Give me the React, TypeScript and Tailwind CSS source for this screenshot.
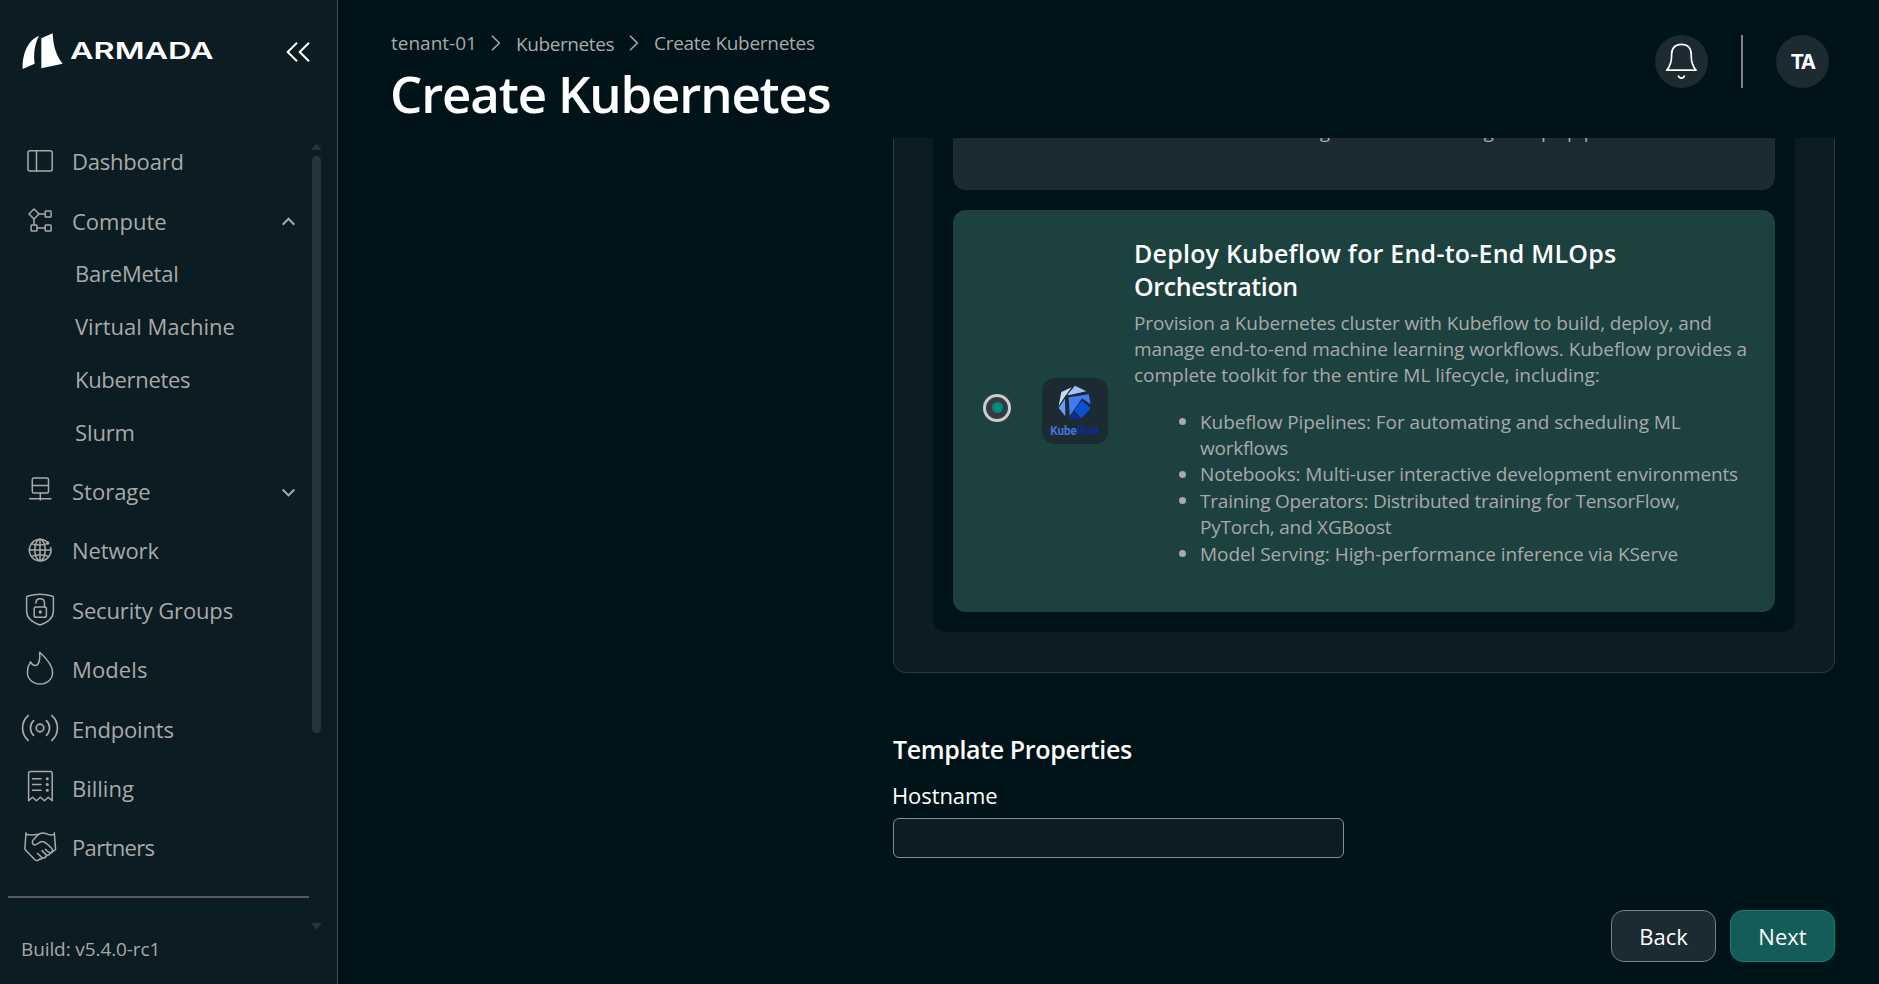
import { ReactNode } from 'react';

type NavItem = {
  label: string;
  tracking: string;
  icon: ReactNode;
  open?: boolean;
  children?: { label: string; tracking: string }[];
};

function NavIcon({ children }: { children: ReactNode }) {
  return (
    <svg
      className="size-[44px] shrink-0"
      viewBox="0 0 44 44"
      fill="none"
      stroke="currentColor"
      strokeWidth="1.5"
      strokeLinecap="round"
      strokeLinejoin="round"
    >
      {children}
    </svg>
  );
}

const navItems: NavItem[] = [
  {
    label: 'Dashboard',
    tracking: 'tracking-[-0.2px]',
    icon: (
      <NavIcon>
        <rect x="10" y="11.7" width="24.2" height="20.2" rx="2" />
        <path d="M18.5 11.7v20.2" />
      </NavIcon>
    ),
  },
  {
    label: 'Compute',
    tracking: 'pt-px tracking-normal',
    open: true,
    icon: (
      <NavIcon>
        <path d="M16 10l5 5-5 5-5-5z" />
        <rect x="27.2" y="12.1" width="5.9" height="5.9" rx="0.8" />
        <rect x="13.1" y="26.1" width="5.9" height="5.9" rx="0.8" />
        <rect x="27.2" y="26.1" width="5.9" height="5.9" rx="0.8" />
        <path d="M21 15h6M16 20v6M19 29h8" />
      </NavIcon>
    ),
    children: [
      { label: 'BareMetal', tracking: 'tracking-[-0.22px]' },
      { label: 'Virtual Machine', tracking: 'tracking-normal' },
      { label: 'Kubernetes', tracking: 'tracking-[-0.3px]' },
      { label: 'Slurm', tracking: 'tracking-[-0.12px]' },
    ],
  },
  {
    label: 'Storage',
    tracking: 'tracking-normal',
    open: false,
    icon: (
      <NavIcon>
        <rect x="14.3" y="9.1" width="16.2" height="15" rx="1.5" />
        <path d="M14.3 16.6h16.2M22.3 24.1v6.9M11.6 29.8h21.2" />
      </NavIcon>
    ),
  },
  {
    label: 'Network',
    tracking: 'tracking-[-0.1px]',
    icon: (
      <NavIcon>
        <path d="M29.4 13A10.8 10.8 0 1 0 32.7 18.6" />
        <ellipse cx="22" cy="21" rx="5.2" ry="10.8" />
        <path d="M11.2 21h21.6M22 10.2v21.6M13.4 14.6c5 2 12 2 16.4-.2M13.4 27.4c5-2 12.2-2 17.2 0" />
        <circle cx="29.8" cy="14" r="0.9" />
      </NavIcon>
    ),
  },
  {
    label: 'Security Groups',
    tracking: 'tracking-[-0.15px]',
    icon: (
      <NavIcon>
        <path d="M8.6 9.6C8.6 8.7 9 8.3 10 8c8-2.4 16-2.4 24 0 1 .3 1.4.7 1.4 1.6v13.2C35.4 30 30 34.5 22 37 14 34.5 8.6 30 8.6 22.8z" />
        <rect x="16.2" y="18.9" width="12.2" height="10.4" rx="1.8" />
        <path d="M17.9 15.2c0-6 8.6-6 8.6 0v3.7" />
        <circle cx="22.3" cy="24" r="0.9" fill="currentColor" />
      </NavIcon>
    ),
  },
  {
    label: 'Models',
    tracking: 'tracking-[0.1px]',
    icon: (
      <NavIcon>
        <path d="M21.7 5.2C22 11 21.4 18 17.5 18.4c-2.2.2-4-1.6-5-3.5C10.5 18 9.4 21 9.4 25.2 9.4 32.2 15 37 22 37c7.4 0 12.6-5 12.6-11.5C34.6 18 26.5 9.5 21.7 5.2z" />
      </NavIcon>
    ),
  },
  {
    label: 'Endpoints',
    tracking: 'pt-px tracking-[-0.15px]',
    icon: (
      <NavIcon>
        <circle cx="22" cy="21" r="3.8" strokeWidth="1.7" />
        <g strokeWidth="1.7">
          <path d="M15.6 13.7c-4.2 4-4.2 10.6 0 14.6M28.4 13.7c4.2 4 4.2 10.6 0 14.6" />
          <path d="M10.2 8.6C2.7 15 2.7 27 10.2 33.4M33.8 8.6c7.5 6.4 7.5 18.4 0 24.8" />
        </g>
      </NavIcon>
    ),
  },
  {
    label: 'Billing',
    tracking: 'tracking-normal',
    icon: (
      <NavIcon>
        <path d="M10.6 34.8V7.4c0-1.2.6-1.8 1.8-1.8h20c1.2 0 1.8.6 1.8 1.8v27.4l-3.9-3.6-3.9 3.6-4-3.6-4 3.6-3.9-3.6z" />
        <path d="M14.5 12.8H23M14.5 18.5H23M14.5 24.2H23" />
        <g fill="currentColor">
          <circle cx="29.3" cy="12.8" r="0.8" />
          <circle cx="29.3" cy="18.5" r="0.8" />
          <circle cx="29.3" cy="24.2" r="0.8" />
        </g>
      </NavIcon>
    ),
  },
  {
    label: 'Partners',
    tracking: 'tracking-[-0.65px]',
    icon: (
      <NavIcon>
        <path d="M8 7.8L6.8 24.3l9.8 10.2c1.5 1.5 3.6 1.5 5-.2" />
        <path d="M8 9.5c4 .6 8 .6 12.5-.2" />
        <path d="M36.3 7.8l1.3 16.5-4.4 3.5" />
        <path d="M36.3 9.5c-3 .9-5.6.4-8-.8-3-1.4-6-.8-8.5 1.2l-4.6 5c-1.6 2-.8 4.7 1.6 5 2.8.2 4.2-3.6 7.4-3.4 3.4 0 5.6 3.5 9 6.3 1.8 1.7 1.4 3.6.2 4.7-1.7 1-3.2-.1-6-3.2" />
        <path d="M24 25.6l5 5c1.6-.2 3-1.2 3.4-2.9M19.5 28.3l4.8 4.7c2 .2 3.8-.8 4.3-2.5M21.6 34.3c1 .1 2-.4 2.7-1.3" />
      </NavIcon>
    ),
  },
];

const description = [
  { text: 'Provision a Kubernetes cluster with Kubeflow to build, deploy, and', tracking: 'tracking-[-0.12px]' },
  { text: 'manage end-to-end machine learning workflows. Kubeflow provides a', tracking: 'tracking-[-0.07px]' },
  { text: 'complete toolkit for the entire ML lifecycle, including:', tracking: 'tracking-[-0.03px]' },
];

const features = [
  [
    { text: 'Kubeflow Pipelines: For automating and scheduling ML', tracking: 'tracking-[-0.07px]' },
    { text: 'workflows', tracking: 'tracking-[-0.25px]' },
  ],
  [{ text: 'Notebooks: Multi-user interactive development environments', tracking: 'tracking-[-0.12px]' }],
  [
    { text: 'Training Operators: Distributed training for TensorFlow,', tracking: 'tracking-[-0.22px]' },
    { text: 'PyTorch, and XGBoost', tracking: 'tracking-[-0.22px]' },
  ],
  [{ text: 'Model Serving: High-performance inference via KServe', tracking: 'tracking-[-0.06px]' }],
];

function ArmadaLogo() {
  return (
    <svg className="h-[37px] w-[194px]" viewBox="0 0 582 111" fill="#fff">
      <path d="M2 108C0 62 19 20 51 9 38 33 34 62 38 92z" />
      <path d="M58 106V16L92 1c2 42 12 70 30 91z" />
      <text
        x="144"
        y="77"
        textLength="431"
        lengthAdjust="spacingAndGlyphs"
        className="font-['Inter',sans-serif] text-[69px] font-semibold"
      >
        ARMADA
      </text>
    </svg>
  );
}

function KubeflowLogo() {
  return (
    <svg className="size-[66px]" viewBox="0 0 198 198">
      <path fill="#c3dafc" d="M58 42l31-14-21 28-18 28z" />
      <path fill="#a0c0fb" d="M99 23l34 17-50 11-7-1z" />
      <path fill="#6b9bf8" d="M69 62l1 53-20-25z" />
      <path fill="#4279f4" d="M80 58l60-9 6 30-26-18-37 53z" />
      <path fill="#0b4fd3" d="M119 67l27 24-27 30-23-23z" />
      <path fill="#0a2ba8" d="M94 103l20 19H81z" />
      <text
        x="25"
        y="170"
        textLength="146"
        lengthAdjust="spacingAndGlyphs"
        className="font-['Roboto',sans-serif] text-[36px] font-bold"
      >
        <tspan fill="#4475e0">Kube</tspan>
        <tspan fill="#0b2a9e">flow</tspan>
      </text>
    </svg>
  );
}

function Sidebar() {
  return (
    <aside className="relative flex w-[338px] shrink-0 flex-col border-r border-[#474b4d] bg-[#0b1c22] text-[#a9a9a9]">
      <div className="flex h-[131.5px] items-start justify-between pt-[33px] pr-[27px] pl-[22px]">
        <ArmadaLogo />
        <svg className="mt-[9px] h-[20px] w-[24px]" viewBox="0 0 24 20" fill="none" stroke="#fff" strokeWidth="2">
          <path d="M11 0.8L1.7 10 11 19.2M23 0.8L13.7 10 23 19.2" />
        </svg>
      </div>

      <nav className="flex flex-col text-[22px]">
        {navItems.map((item) => (
          <div key={item.label}>
            <a className="flex h-[59.35px] items-center gap-[10px] pr-[42px] pl-[18px]">
              {item.icon}
              <span className={item.tracking}>{item.label}</span>
              {item.open !== undefined && (
                <svg
                  className="mt-[2px] ml-auto h-[9px] w-[13px]"
                  viewBox="0 0 13 9"
                  fill="none"
                  stroke="currentColor"
                  strokeWidth="2"
                >
                  <path d={item.open ? 'M0.7 7.7l5.8-5.9 5.8 5.9' : 'M0.7 1.5l5.8 5.9 5.8-5.9'} />
                </svg>
              )}
            </a>
            {item.children?.map((child) => (
              <a key={child.label} className="flex h-[52.9px] items-center pb-[6.5px] pl-[75px]">
                <span className={child.tracking}>{child.label}</span>
              </a>
            ))}
          </div>
        ))}
      </nav>

      <div className="mt-[18.8px] mr-[28px] ml-[8px] h-[2px] shrink-0 bg-[#575a5b]" />
      <p className="mt-[38px] pl-[21px] text-[19px] leading-[26px] tracking-[-0.1px]">Build: v5.4.0-rc1</p>

      {/* scrollbar */}
      <div className="absolute top-[144px] right-[16px] flex h-[785px] w-[9px] flex-col text-[#26343a]">
        <svg className="h-[6px] w-[9px]" viewBox="0 0 9 6" fill="currentColor">
          <path d="M0 6V5L3.5 0.5q1-1 2 0L9 5v1z" />
        </svg>
        <div className="mt-[6px] h-[577px] w-[9px] rounded-full bg-[#26343a]" />
        <svg className="mt-auto h-[6px] w-[9px]" viewBox="0 0 9 6" fill="currentColor">
          <path d="M0 0v1l3.5 4.5q1 1 2 0L9 1V0z" />
        </svg>
      </div>
    </aside>
  );
}

function Separator() {
  return (
    <svg className="h-[16px] w-[10px]" viewBox="0 0 10 16" fill="none" stroke="#a9a9a9" strokeWidth="1.5">
      <path d="M1 0.8L8.3 8 1 15.2" />
    </svg>
  );
}

function Header() {
  return (
    <header className="flex h-[138px] shrink-0 items-start justify-between pr-[50px] pl-[53px]">
      <div className="pt-[29.5px]">
        <div className="flex items-start text-[19px] leading-[26px] text-[#a9a9a9]">
          <span className="w-[100px]">tenant-01</span>
          <span className="w-[25px] pt-[5px]">
            <Separator />
          </span>
          <span className="w-[113px] pt-px tracking-[-0.4px]">Kubernetes</span>
          <span className="w-[25px] pt-[5px]">
            <Separator />
          </span>
          <span className="tracking-[-0.28px]">Create Kubernetes</span>
        </div>
        <h1 className="mt-[6px] -ml-px text-[51px] leading-[60px] font-semibold tracking-[-1.17px] text-white">
          Create Kubernetes
        </h1>
      </div>

      <div className="flex items-center gap-[33px] pt-[35px]">
        <button className="size-[53px] rounded-full bg-[#1c2a31]">
          <svg className="size-[53px]" viewBox="0 0 53 53" fill="none" stroke="#fff" strokeWidth="1.7">
            <path
              strokeLinejoin="round"
              d="M11.7 35.2C15 31.5 16.6 26 16.6 20.5v-1.3C16.6 13 20.6 9.4 26.4 9.4S36.2 13 36.2 19.2v1.3c0 5.5 1.6 11 4.9 14.7z"
            />
            <path d="M23.2 40.6c1 3.3 5.4 3.3 6.4 0" />
          </svg>
        </button>
        <div className="h-[53px] w-[2px] bg-[#808285]" />
        <div className="flex size-[53px] items-center justify-center rounded-full bg-[#1c2a31] pt-[2px] font-['Inter',sans-serif] text-[20.5px] font-bold tracking-[-1.5px] text-white">
          TA
        </div>
      </div>
    </header>
  );
}

export default function App() {
  return (
    <div className="flex h-[984px] w-[1879px] overflow-hidden bg-[#001318] font-['Open_Sans',sans-serif]">
      <Sidebar />

      <main className="flex min-w-0 flex-1 flex-col">
        <Header />

        <section className="min-h-0 flex-1 overflow-hidden pr-[44px] pl-[555px]">
          {/* template list, scrolled down to its last card */}
          <div className="-mt-[20px] rounded-b-[13px] border border-t-0 border-[#2e383c] bg-[#0b1c22] px-[39px] pb-[40px]">
            <div className="flex flex-col gap-[20px] rounded-b-[13px] bg-[#001318] px-[20px] pb-[20px]">
              <div className="h-[72px] rounded-b-[13px] bg-[#1c2a31] pl-[171px] text-[19px] leading-[26px] tracking-[0.1px] whitespace-nowrap text-[#a9a9a9]">
                some tools for building and orchestrating MLOps pipelines.
              </div>

              <div className="flex h-[402px] rounded-[13px] bg-[#1c413f] pl-[30px]">
                <div className="mb-[7px] flex size-[28px] shrink-0 items-center justify-center self-center rounded-full border-[3px] border-[#cccccc] bg-[#333b40]">
                  <span className="size-[11px] rounded-full bg-[#00897b]" />
                </div>
                <div className="ml-[31px] size-[66px] shrink-0 self-center rounded-[13px] bg-[#1c2a31]">
                  <KubeflowLogo />
                </div>
                <div className="ml-[26px] pt-[27px] whitespace-nowrap text-[#a9a9a9]">
                  <h3 className="text-[25px] leading-[33px] font-semibold text-white">
                    <span className="block tracking-[0.22px]">Deploy Kubeflow for End-to-End MLOps</span>
                    <span className="block tracking-[-0.36px]">Orchestration</span>
                  </h3>
                  <p className="mt-[6.5px] text-[19px] leading-[26px]">
                    {description.map((line) => (
                      <span key={line.text} className={`block ${line.tracking}`}>
                        {line.text}
                      </span>
                    ))}
                  </p>
                  <ul className="mt-[21px] pl-[45px] text-[19px] leading-[26.4px]">
                    {features.map((lines) => (
                      <li key={lines[0].text} className="flex gap-[14px]">
                        <span className="mt-[9.5px] size-[7px] rounded-full bg-[#a9a9a9]" />
                        <div>
                          {lines.map((line) => (
                            <span key={line.text} className={`block ${line.tracking}`}>
                              {line.text}
                            </span>
                          ))}
                        </div>
                      </li>
                    ))}
                  </ul>
                </div>
              </div>
            </div>
          </div>

          <h2 className="mt-[59px] text-[25px] leading-[34px] font-semibold tracking-[-0.37px] text-white">
            Template Properties
          </h2>
          <label className="mt-[13.5px] -ml-px block text-[22px] leading-[30px] tracking-[-0.1px] text-white" htmlFor="hostname">
            Hostname
          </label>
          <input
            id="hostname"
            type="text"
            className="mt-[8.5px] block h-[40px] w-[451px] rounded-[6px] border border-[#8a8d8e] bg-[#0b1c22] px-3 text-white"
          />

          <div className="mt-[52px] flex justify-end gap-[14px] text-[22px] text-white">
            <button className="h-[52px] w-[105px] rounded-[13px] border border-[#7c7f82] bg-[#1c2a31]">Back</button>
            <button className="h-[52px] w-[105px] rounded-[13px] border border-[#00897b] bg-[#145c57]">Next</button>
          </div>
        </section>
      </main>
    </div>
  );
}
